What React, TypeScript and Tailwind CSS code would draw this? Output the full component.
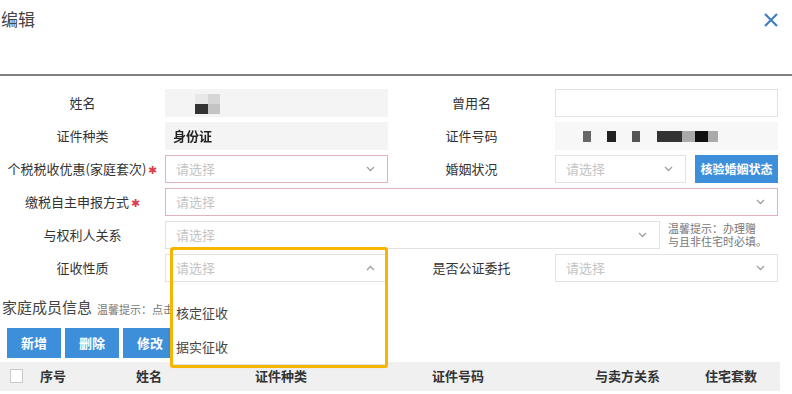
import type { ReactNode } from "react";

const FONT = '"Noto Sans CJK SC", "Liberation Sans", sans-serif';

function Chevron({ up = false }: { up?: boolean }) {
  return (
    <svg width="9" height="6" viewBox="0 0 9 6" className="shrink-0">
      <path
        d={up ? "M1 5 L4.5 1.5 L8 5" : "M1 1 L4.5 4.5 L8 1"}
        fill="none"
        stroke="#a0a0a0"
        strokeWidth="1.3"
      />
    </svg>
  );
}

function Label({ children, required = false }: { children: ReactNode; required?: boolean }) {
  return (
    <div className="flex h-[28px] items-center justify-center whitespace-nowrap text-[13px] text-[#333]">
      {children}
      {required && <span className="ml-[2px] text-[11px] text-[#d8404f]">✱</span>}
    </div>
  );
}

function Select({ required = false, up = false }: { required?: boolean; up?: boolean }) {
  return (
    <div
      className={`flex h-[28px] w-full items-center justify-between border bg-white pl-[10px] pr-[12px] ${
        required ? "border-[#e2b3bb]" : "border-[#e2e2e2]"
      }`}
    >
      <span className="text-[13px] text-[#c4c4c4]">请选择</span>
      <Chevron up={up} />
    </div>
  );
}

export default function App() {
  return (
    <div
      className="relative h-[394px] w-[792px] overflow-hidden bg-white"
      style={{ fontFamily: FONT }}
    >
      {/* header */}
      <div className="flex h-[74px] items-start justify-between">
        <h1 className="pl-[1px] pt-[6px] text-[17px] font-normal text-[#444]">编辑</h1>
        <svg width="16" height="16" viewBox="0 0 16 16" className="mr-[13px] mt-[12px]">
          <path d="M2 2 L14 14 M14 2 L2 14" stroke="#3f7fc1" strokeWidth="2.2" />
        </svg>
      </div>
      <div className="h-[2px] bg-[#808080]" />

      {/* form */}
      <div className="mt-[13px] grid w-[778px] grid-cols-[165px_223px_167px_223px] gap-y-[5px]">
        <Label>姓名</Label>
        <div className="relative h-[28px] bg-[#f4f4f4]">
          <div className="absolute left-[30px] top-[5px] grid grid-cols-[13px_12px] grid-rows-[10px_10px] blur-[0.4px]">
            <div className="bg-[#e8e8e8]" />
            <div className="bg-[#d6d6d6]" />
            <div className="bg-[#333]" />
            <div className="bg-[#c4c4c4]" />
          </div>
        </div>
        <Label>曾用名</Label>
        <div className="h-[28px] border border-[#e2e2e2] bg-white" />

        <Label>证件种类</Label>
        <div className="flex h-[28px] items-center bg-[#f4f4f4] pl-[8px]">
          <span className="text-[13px] font-bold text-[#222] blur-[0.5px]">身份证</span>
        </div>
        <Label>证件号码</Label>
        <div className="flex h-[28px] items-center bg-[#f7f7f7] pl-[28px]">
          <div className="flex h-[11px] blur-[0.4px]">
            <div className="w-[8px] bg-[#666]" />
            <div className="ml-[16px] w-[9px] bg-[#222]" />
            <div className="ml-[16px] w-[8px] bg-[#555]" />
            <div className="ml-[17px] w-[25px] bg-[#333]" />
            <div className="w-[13px] bg-[#aaa]" />
            <div className="w-[13px] bg-[#111]" />
            <div className="w-[10px] bg-[#aaa]" />
          </div>
        </div>

        <Label required>个税税收优惠(家庭套次)</Label>
        <Select required />
        <Label>婚姻状况</Label>
        <div className="flex h-[28px] gap-[9px]">
          <Select />
          <button className="h-[28px] w-[83px] shrink-0 bg-[#3d8fd9] text-[12px] font-bold text-white">
            核验婚姻状态
          </button>
        </div>

        <Label required>缴税自主申报方式 </Label>
        <div className="col-span-3">
          <Select required />
        </div>

        <Label>与权利人关系</Label>
        <div className="col-span-3 flex h-[28px] gap-[8px]">
          <div className="w-[495px] shrink-0">
            <Select />
          </div>
          <p className="pt-[1px] text-[11px] leading-[13px] whitespace-nowrap text-[#777]">
            <span className="block">温馨提示：办理赠</span>
            <span className="block">与且非住宅时必填。</span>
          </p>
        </div>

        <Label>征收性质</Label>
        <div className="relative z-10">
          <Select up />
          <div className="absolute left-[7px] top-[30px] w-[214px] bg-white pt-[12px] shadow-[0_2px_6px_rgba(0,0,0,0.08)]">
            <div className="flex h-[34px] items-center pl-[4px] text-[13px] text-[#444]">核定征收</div>
            <div className="flex h-[34px] items-center pl-[4px] text-[13px] text-[#444]">据实征收</div>
          </div>
          <div className="absolute left-[5px] top-[-7px] h-[121px] w-[218px] rounded-[3px] border-[3px] border-[#f7b500]" />
        </div>
        <Label>是否公证委托</Label>
        <Select />
      </div>

      {/* family members */}
      <div className="mt-[14px] flex items-end pl-[2px]">
        <span className="text-[15px] text-[#444]">家庭成员信息</span>
        <span className="mb-[1px] ml-[5px] whitespace-nowrap text-[11px] text-[#777]">
          温馨提示：点击新增按钮添加家庭成员
        </span>
      </div>
      <div className="mt-[9px] flex gap-[4px] pl-[7px]">
        {["新增", "删除", "修改"].map((t) => (
          <button key={t} className="h-[30px] w-[54px] bg-[#3d8fd9] text-[13px] font-bold text-white">
            {t}
          </button>
        ))}
      </div>
      <div className="mt-[4px] flex h-[29px] w-[780px] items-center bg-[#f0f0f0] text-[13px] font-bold text-[#333]">
        <div className="w-[40px] pl-[10px]">
          <div className="h-[14px] w-[13px] border border-[#c8c8c8] bg-white" />
        </div>
        <div className="w-[96px]">序号</div>
        <div className="w-[119px]">姓名</div>
        <div className="w-[177px]">证件种类</div>
        <div className="w-[163px]">证件号码</div>
        <div className="w-[110px]">与卖方关系</div>
        <div>住宅套数</div>
      </div>
    </div>
  );
}
